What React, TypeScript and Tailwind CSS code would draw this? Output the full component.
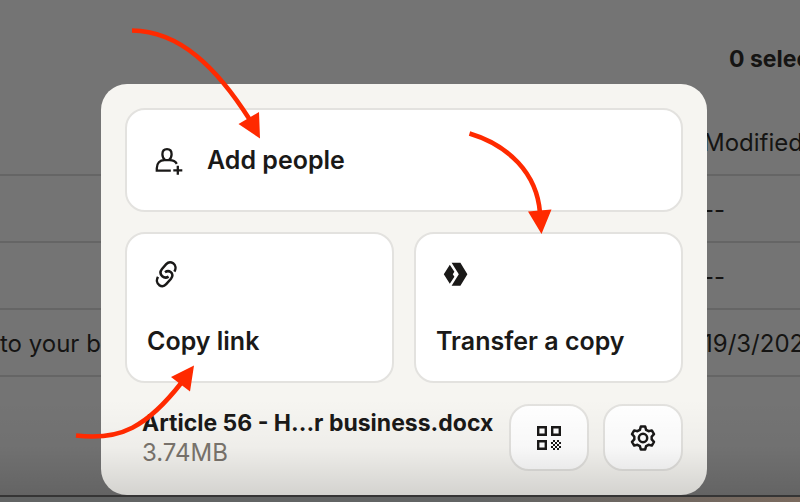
import { ReactNode } from "react"

type FileRow = {
  name: string
  modified: string
}

const FILES: FileRow[] = [
  { name: "", modified: "--" },
  { name: "", modified: "--" },
  { name: "to your b", modified: "19/3/202" },
]

/* ─── icons ─── */

const AddPersonIcon = () => (
  <svg aria-hidden className="size-7 shrink-0" viewBox="0 0 28 28" fill="none" stroke="currentColor" strokeWidth="2.3">
    <path d="M10 13C8.2 11.6 7.4 9.6 7.4 7.2C7.4 4 9.2 2.1 12 2.1S16.6 4 16.6 7.2C16.6 9.6 15.8 11.6 14 13" />
    <path d="M15.8 23.6H1.8V21.2C1.8 16.2 4.8 13.2 9.4 13.2H14.6C18 13.2 20.4 14.4 21.8 16.8" />
    <path d="M22.8 18.8v9M18.3 23.3h9" />
  </svg>
)

const LinkIcon = () => (
  <svg aria-hidden className="size-7" viewBox="0 0 28 28" fill="none" stroke="currentColor" strokeWidth="2.5">
    <path d="M21.4 11.6C23.2 8.6 22.6 5 20.2 3.3C17.8 1.7 15 2.2 13.2 4.2L9 9C7 11.5 7.2 14.3 9.3 16.2C11 17.7 13.6 17.9 15.6 16.6" />
    <path d="M5 16.8C3.2 19.8 3.8 23.4 6.2 25.1C8.6 26.7 11.4 26.2 13.2 24.2L18 18.8C20 16.3 19.8 13.5 17.7 12C15.9 10.8 13.8 10.9 12 12.2" />
  </svg>
)

const TransferIcon = () => (
  <svg aria-hidden className="size-7" viewBox="0 0 28 28" fill="currentColor">
    <path d="M9.6 2.8H18.4L25.4 14.3L18.4 25.8H9.6L16.8 14.3Z" />
    <path d="M7.8 4.8L12.4 11.8L10.8 14.3L12.4 16.8L7.8 23.8L1.8 14.3Z" />
  </svg>
)

const QrIcon = () => (
  <svg aria-hidden className="size-6" viewBox="0 0 24 24" fill="none" stroke="currentColor" strokeWidth="2.4">
    <path d="M1.2 1.2h7.6v7.6h-7.6zM15.2 1.2h7.6v7.6h-7.6zM1.2 15.2h7.6v7.6h-7.6z" />
    <path
      stroke="none"
      fill="currentColor"
      d="M16 14h2v2h-2zM20 14h2v2h-2zM14 16h2v2h-2zM18 16h2v2h-2zM22 16h2v2h-2zM16 18h2v2h-2zM20 18h2v2h-2zM14 20h2v2h-2zM18 20h2v2h-2zM22 20h2v2h-2zM16 22h2v2h-2zM20 22h2v2h-2z"
    />
  </svg>
)

const GearIcon = () => (
  <svg aria-hidden className="size-7" viewBox="0 0 28 28" fill="none" stroke="currentColor" strokeWidth="2.5" strokeLinejoin="round">
    <path d="M11.8 2.6H16.2L17.1 5.8L19.6 7.2L22.8 6.4L25 10.2L22.7 12.6V15.4L25 17.8L22.8 21.6L19.6 20.8L17.1 22.2L16.2 25.4H11.8L10.9 22.2L8.4 20.8L5.2 21.6L3 17.8L5.3 15.4V12.6L3 10.2L5.2 6.4L8.4 7.2L10.9 5.8Z" />
    <circle cx="14" cy="14" r="4.2" />
  </svg>
)

/* ─── file list behind the dialog ─── */

function FileList() {
  return (
    <div className="overflow-hidden whitespace-nowrap font-['Inter',sans-serif] text-[#151413]">
      <div className="grid h-[108px] grid-cols-[1fr_71px] pt-11">
        <p className="col-start-2 text-[23px] leading-[30px] font-bold">0 selected</p>
      </div>
      <table className="w-full table-fixed border-collapse text-left text-2xl">
        <colgroup>
          <col />
          <col className="w-[97px]" />
        </colgroup>
        <thead>
          <tr className="h-[67px] border-b-2 border-[#656565]">
            <th aria-label="Name" />
            <th className="pt-1 pb-0 font-normal">Modified</th>
          </tr>
        </thead>
        <tbody>
          {FILES.map((file, i) => (
            <tr key={i} className="h-[67px] border-b-2 border-[#656565]">
              <td className="pt-0.5">{file.name}</td>
              <td className="pt-0.5">{file.modified}</td>
            </tr>
          ))}
        </tbody>
      </table>
    </div>
  )
}

/* ─── share dialog ─── */

function ShareCard({ icon, label }: { icon: ReactNode; label: string }) {
  return (
    <button
      type="button"
      className="flex h-[151px] flex-col items-start justify-between rounded-[20px] border-2 border-[#e3e2df] bg-white px-5 pt-[26px] pb-6 text-[25px] leading-8 font-semibold"
    >
      <span className="px-1.5">{icon}</span>
      {label}
    </button>
  )
}

function IconButton({ label, children }: { label: string; children: ReactNode }) {
  return (
    <button
      type="button"
      aria-label={label}
      className="flex h-[67px] w-20 shrink-0 items-center justify-center rounded-[20px] border-2 border-[#e3e2df] bg-white"
    >
      {children}
    </button>
  )
}

function ShareDialog() {
  return (
    <div
      role="dialog"
      aria-label="Share"
      className="rounded-[26px] bg-[#f6f5f1] p-6 font-['Inter',sans-serif] text-[#1a1918]"
    >
      <button
        type="button"
        className="flex h-[104px] w-full items-center gap-6 rounded-[20px] border-2 border-[#e3e2df] bg-white px-7 pt-0.5 text-[25px] font-semibold"
      >
        <AddPersonIcon />
        Add people
      </button>
      <div className="mt-5 grid grid-cols-2 gap-5">
        <ShareCard icon={<LinkIcon />} label="Copy link" />
        <ShareCard icon={<TransferIcon />} label="Transfer a copy" />
      </div>
      <div className="mt-[21px] flex gap-3.5">
        <div className="min-w-0 flex-1 pt-1 pl-[17px] whitespace-nowrap">
          <p className="text-[23px] leading-[30px] font-bold">Article 56 - H...r business.docx</p>
          <p className="text-2xl leading-[30px] text-[#7b756e]">3.74MB</p>
        </div>
        <IconButton label="Show QR code">
          <QrIcon />
        </IconButton>
        <IconButton label="Settings">
          <GearIcon />
        </IconButton>
      </div>
    </div>
  )
}

/* ─── hand-drawn pointers over the dialog ─── */

function Arrows() {
  return (
    <svg
      aria-hidden
      className="pointer-events-none absolute top-0 left-0 z-30"
      width="800"
      height="502"
      viewBox="0 0 800 502"
      fill="none"
      stroke="#ff2a00"
      strokeWidth="4.6"
    >
      <path d="M132 30.5C180 31 217 68 250 120" />
      <path d="M469.5 133.5C508 145 537 173 540 213" />
      <path d="M76 435.5C120 441 147 427 182 382" />
      <path
        stroke="none"
        fill="#ff2a00"
        d="M238.5 124L259 112L260 138.5ZM528 211.5L551.5 209.5L541.5 234ZM171 377L194 365.5L190 391.5Z"
      />
    </svg>
  )
}

export default function App() {
  return (
    <div className="relative flex min-h-screen flex-col overflow-hidden bg-[#747474]">
      <div className="grid flex-1 grid-cols-1">
        <div className="col-start-1 row-start-1 min-w-0">
          <FileList />
        </div>
        <div className="z-10 col-start-1 row-start-1 min-w-0 pt-[84px] pr-[93px] pl-[101px]">
          <ShareDialog />
        </div>
        <div className="pointer-events-none z-20 col-start-1 row-start-1 h-24 self-end bg-linear-to-b from-transparent via-black/3 to-black/14" />
      </div>
      <div className="h-[7px] border-t-2 border-[#353535] bg-linear-to-r from-[#626464] from-60% to-[#7a6a5e]" />
      <Arrows />
    </div>
  )
}
